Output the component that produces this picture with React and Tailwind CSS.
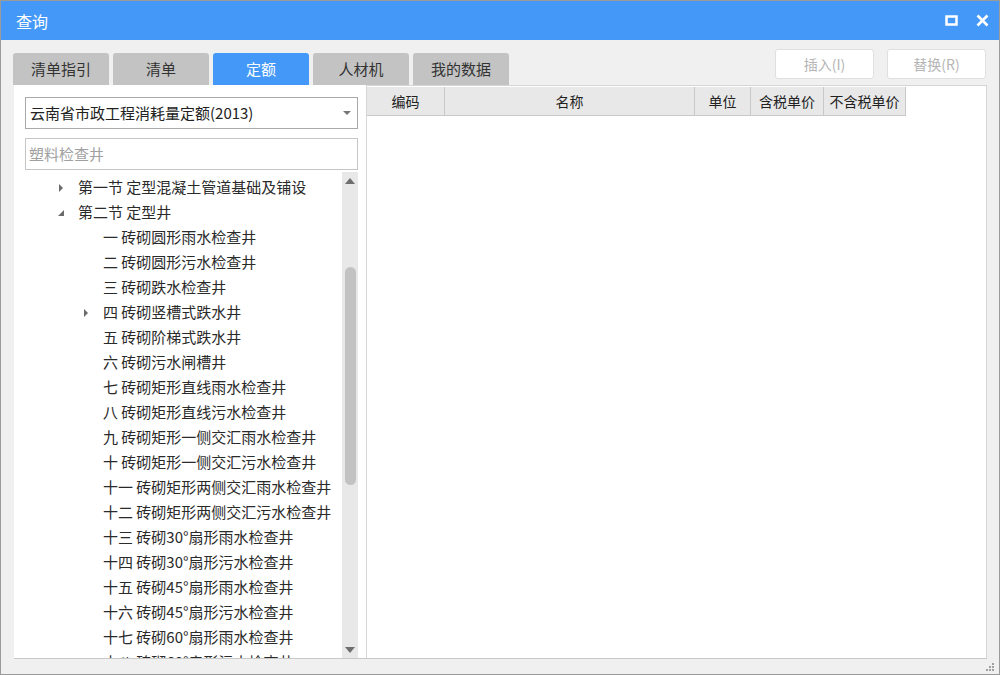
import React from 'react';

const font = { fontFamily: '"Noto Sans CJK SC", "Noto Sans", sans-serif' };

const tabs = ['清单指引', '清单', '定额', '人材机', '我的数据'];

const rows = [
    { text: '第一节 定型混凝土管道基础及铺设', level: 0, arrow: 'closed' },
    { text: '第二节 定型井', level: 0, arrow: 'open' },
    { text: '一 砖砌圆形雨水检查井', level: 1 },
    { text: '二 砖砌圆形污水检查井', level: 1 },
    { text: '三 砖砌跌水检查井', level: 1 },
    { text: '四 砖砌竖槽式跌水井', level: 1, arrow: 'closed' },
    { text: '五 砖砌阶梯式跌水井', level: 1 },
    { text: '六 砖砌污水闸槽井', level: 1 },
    { text: '七 砖砌矩形直线雨水检查井', level: 1 },
    { text: '八 砖砌矩形直线污水检查井', level: 1 },
    { text: '九 砖砌矩形一侧交汇雨水检查井', level: 1 },
    { text: '十 砖砌矩形一侧交汇污水检查井', level: 1 },
    { text: '十一 砖砌矩形两侧交汇雨水检查井', level: 1 },
    { text: '十二 砖砌矩形两侧交汇污水检查井', level: 1 },
    { text: '十三 砖砌30°扇形雨水检查井', level: 1 },
    { text: '十四 砖砌30°扇形污水检查井', level: 1 },
    { text: '十五 砖砌45°扇形雨水检查井', level: 1 },
    { text: '十六 砖砌45°扇形污水检查井', level: 1 },
    { text: '十七 砖砌60°扇形雨水检查井', level: 1 },
    { text: '十八 砖砌60°扇形污水检查井', level: 1 },
];

const cols = [
    { name: '编码', w: 'w-[78px]' },
    { name: '名称', w: 'w-[250px]' },
    { name: '单位', w: 'w-[56px]' },
    { name: '含税单价', w: 'w-[73px]' },
    { name: '不含税单价', w: 'w-[82px]' },
];

const Arrow = ({ kind }) => {
    if (kind === 'closed') {
        return (
            <svg width="8" height="10" viewBox="0 0 8 10">
                <path d="M2 1 L6 5 L2 9 Z" fill="#6b6b6b" />
            </svg>
        );
    }
    if (kind === 'open') {
        return (
            <svg width="8" height="10" viewBox="0 0 8 10">
                <path d="M7 2 L7 8 L1 8 Z" fill="#6b6b6b" />
            </svg>
        );
    }
    return null;
};

const App = () => {
    return (
        <div className="w-[1000px] h-[675px] flex flex-col bg-[#f0f0f0] border border-[#9a9a9a] overflow-hidden" style={font}>
            {/* title bar */}
            <div className="h-[39px] bg-[#4499f8] flex items-center justify-between pl-[15px] pr-[10px] shrink-0">
                <span className="text-white text-[16px]">查询</span>
                <div className="flex items-center gap-[18px]">
                    <svg width="13" height="11" viewBox="0 0 13 11">
                        <rect x="1.5" y="1.5" width="10" height="8" fill="none" stroke="white" strokeWidth="2.5" />
                    </svg>
                    <svg width="13" height="13" viewBox="0 0 13 13">
                        <path d="M1.5 1.5 L11.5 11.5 M11.5 1.5 L1.5 11.5" stroke="white" strokeWidth="2.6" />
                    </svg>
                </div>
            </div>

            <div className="flex-1 min-h-0 flex flex-col px-[12px] pb-[15px]">
                {/* tabs + buttons */}
                <div className="flex items-end justify-between h-[45px] shrink-0">
                    <div className="flex gap-[4px]">
                        {tabs.map((t, i) => (
                            <div
                                key={t}
                                className={
                                    'w-[96px] h-[32px] flex items-center justify-center text-[15px] rounded-t-[3px] ' +
                                    (i === 2 ? 'bg-[#4499f8] text-white' : 'bg-[#c3c3c3] text-[#333]')
                                }
                            >
                                {t}
                            </div>
                        ))}
                    </div>
                    <div className="flex gap-[13px] self-start mt-[9px] mr-[1px]">
                        <div className="w-[99px] h-[30px] bg-white border border-[#e0e0e0] rounded-[3px] flex items-center justify-center text-[14px] text-[#b5b5b5]">插入(I)</div>
                        <div className="w-[99px] h-[30px] bg-white border border-[#e0e0e0] rounded-[3px] flex items-center justify-center text-[14px] text-[#b5b5b5]">替换(R)</div>
                    </div>
                </div>

                {/* main panel */}
                <div className="flex-1 flex min-h-0 border-b border-[#c8c8c8] ml-[1px]">
                    {/* left pane */}
                    <div className="w-[352px] min-h-0 bg-white flex flex-col pl-[11px] pr-[8px] pt-[12px] shrink-0">
                        <div className="h-[32px] shrink-0 border border-[#a9a9a9] flex items-center justify-between pl-[4px] pr-[6px] text-[15px] text-[#222]">
                            <span>云南省市政工程消耗量定额(2013)</span>
                            <svg width="8" height="5" viewBox="0 0 8 5">
                                <path d="M0 0 L8 0 L4 4 Z" fill="#777" />
                            </svg>
                        </div>
                        <div className="h-[32px] shrink-0 mt-[9px] border border-[#c5c5c5] flex items-center pl-[3px] text-[15px] text-[#a0a0a0]">
                            塑料检查井
                        </div>
                        <div className="flex-1 flex min-h-0 mt-[2px]">
                            <div className="flex-1 overflow-hidden pt-[3px]">
                                {rows.map((r) => (
                                    <div
                                        key={r.text}
                                        className={'h-[25px] flex items-center text-[15px] text-[#2a2a2a] whitespace-nowrap ' + (r.level === 0 ? 'pl-[32px]' : 'pl-[57px]')}
                                    >
                                        <span className="w-[21px] flex items-center">
                                            <Arrow kind={r.arrow} />
                                        </span>
                                        {r.text}
                                    </div>
                                ))}
                            </div>
                            <div className="w-[16px] bg-[#e8e8e8] flex flex-col items-center shrink-0">
                                <svg className="mt-[6px] shrink-0" width="10" height="6" viewBox="0 0 10 6">
                                    <path d="M5 0 L10 6 L0 6 Z" fill="#6e6e6e" />
                                </svg>
                                <div className="w-[11px] h-[218px] shrink-0 bg-[#c2c2c2] rounded-full mt-[83px]" />
                                <div className="flex-1" />
                                <svg className="mb-[5px] shrink-0" width="10" height="6" viewBox="0 0 10 6">
                                    <path d="M0 0 L10 0 L5 6 Z" fill="#6e6e6e" />
                                </svg>
                            </div>
                        </div>
                    </div>
                    <div className="w-[1px] bg-[#d6d6d6]" />
                    {/* right pane */}
                    <div className="flex-1 bg-white border-t border-r border-[#d6d6d6] pt-[1px]">
                        <div className="flex h-[29px] bg-[#e8e8e8] w-fit border-b border-[#c8c8c8]">
                            {cols.map((c) => (
                                <div
                                    key={c.name}
                                    className={c.w + ' flex items-center justify-center text-[14px] text-[#222] border-r border-[#c8c8c8]'}
                                >
                                    {c.name}
                                </div>
                            ))}
                        </div>
                    </div>
                </div>
                <div className="h-0 relative">
                    <svg className="absolute right-[-8px] top-[3px]" width="10" height="10" viewBox="0 0 10 10">
                        <rect x="7" y="1" width="2" height="2" fill="#a0a0a0" />
                        <rect x="4" y="4" width="2" height="2" fill="#a0a0a0" />
                        <rect x="7" y="4" width="2" height="2" fill="#a0a0a0" />
                        <rect x="1" y="7" width="2" height="2" fill="#a0a0a0" />
                        <rect x="4" y="7" width="2" height="2" fill="#a0a0a0" />
                        <rect x="7" y="7" width="2" height="2" fill="#a0a0a0" />
                    </svg>
                </div>
            </div>
        </div>
    );
};

export default App;
